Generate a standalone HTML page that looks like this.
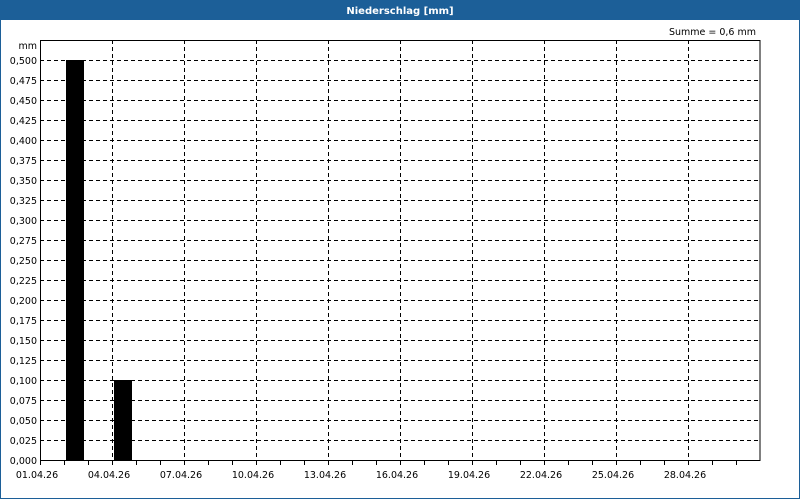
<!DOCTYPE html>
<html><head><meta charset="utf-8"><style>
html,body{margin:0;padding:0;background:#fff;}
svg{display:block;font-family:"DejaVu Sans","Liberation Sans",sans-serif;}
</style></head><body>
<svg width="800" height="500" viewBox="0 0 800 500" xmlns="http://www.w3.org/2000/svg">
<rect x="0" y="0" width="800" height="500" fill="#fff"/>
<rect x="0" y="0" width="800" height="20" fill="#1c5f98"/>
<rect x="0.5" y="19.5" width="799" height="479" fill="none" stroke="#1c5f98" stroke-width="1"/>
<text x="400" y="14" text-anchor="middle" fill="#fff" font-size="10" font-weight="bold">Niederschlag [mm]</text>
<text x="756" y="35" text-anchor="end" fill="#000" font-size="9.5">Summe = 0,6 mm</text>
<text x="37" y="49" text-anchor="end" font-size="9.5">mm</text>
<g stroke="#000" stroke-width="1" stroke-dasharray="4,3" fill="none">
<path d="M40 60.5H760M40 80.5H760M40 100.5H760M40 120.5H760M40 140.5H760M40 160.5H760M40 180.5H760M40 200.5H760M40 220.5H760M40 240.5H760M40 260.5H760M40 280.5H760M40 300.5H760M40 320.5H760M40 340.5H760M40 360.5H760M40 380.5H760M40 400.5H760M40 420.5H760M40 440.5H760"/>
<path d="M112.5 40V460M184.5 40V460M256.5 40V460M328.5 40V460M400.5 40V460M472.5 40V460M544.5 40V460M616.5 40V460M688.5 40V460"/>
</g>
<rect x="40.5" y="40.5" width="719.5" height="420" fill="none" stroke="#000"/>
<g stroke="#000">
<path d="M64.5 460V465M88.5 460V465M112.5 460V465M136.5 460V465M160.5 460V465M184.5 460V465M208.5 460V465M232.5 460V465M256.5 460V465M280.5 460V465M304.5 460V465M328.5 460V465M352.5 460V465M376.5 460V465M400.5 460V465M424.5 460V465M448.5 460V465M472.5 460V465M496.5 460V465M520.5 460V465M544.5 460V465M568.5 460V465M592.5 460V465M616.5 460V465M640.5 460V465M664.5 460V465M688.5 460V465M712.5 460V465M736.5 460V465M40.5 460V465"/>
</g>
<rect x="66" y="60" width="18" height="401" fill="#000"/>
<rect x="114" y="380" width="18" height="81" fill="#000"/>
<g font-size="9.5" text-anchor="end" fill="#000">
<text x="37" y="64">0,500</text><text x="37" y="84">0,475</text><text x="37" y="104">0,450</text><text x="37" y="124">0,425</text><text x="37" y="144">0,400</text><text x="37" y="164">0,375</text><text x="37" y="184">0,350</text><text x="37" y="204">0,325</text><text x="37" y="224">0,300</text><text x="37" y="244">0,275</text><text x="37" y="264">0,250</text><text x="37" y="284">0,225</text><text x="37" y="304">0,200</text><text x="37" y="324">0,175</text><text x="37" y="344">0,150</text><text x="37" y="364">0,125</text><text x="37" y="384">0,100</text><text x="37" y="404">0,075</text><text x="37" y="424">0,050</text><text x="37" y="444">0,025</text><text x="37" y="464">0,000</text>
</g>
<g font-size="9.5" text-anchor="middle" fill="#000">
<text x="37" y="478">01.04.26</text><text x="109" y="478">04.04.26</text><text x="181" y="478">07.04.26</text><text x="253" y="478">10.04.26</text><text x="325" y="478">13.04.26</text><text x="397" y="478">16.04.26</text><text x="469" y="478">19.04.26</text><text x="541" y="478">22.04.26</text><text x="613" y="478">25.04.26</text><text x="685" y="478">28.04.26</text>
</g>
</svg>
</body></html>
